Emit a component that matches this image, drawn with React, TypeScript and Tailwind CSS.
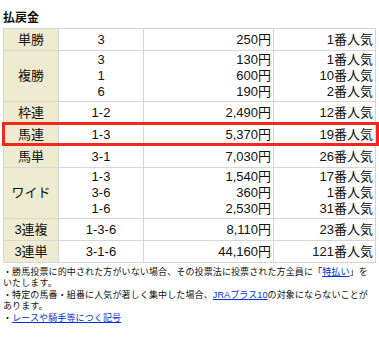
import React from 'react';

const font = { fontFamily: '"Liberation Sans", "Noto Sans CJK JP", sans-serif' };

type Row = { label: string; nums: string[]; pays: string[]; pops: string[] };

const rows: Row[] = [
  { label: '単勝', nums: ['3'], pays: ['250円'], pops: ['1番人気'] },
  { label: '複勝', nums: ['3', '1', '6'], pays: ['130円', '600円', '190円'], pops: ['1番人気', '10番人気', '2番人気'] },
  { label: '枠連', nums: ['1-2'], pays: ['2,490円'], pops: ['12番人気'] },
  { label: '馬連', nums: ['1-3'], pays: ['5,370円'], pops: ['19番人気'] },
  { label: '馬単', nums: ['3-1'], pays: ['7,030円'], pops: ['26番人気'] },
  { label: 'ワイド', nums: ['1-3', '3-6', '1-6'], pays: ['1,540円', '360円', '2,530円'], pops: ['17番人気', '1番人気', '31番人気'] },
  { label: '3連複', nums: ['1-3-6'], pays: ['8,110円'], pops: ['23番人気'] },
  { label: '3連単', nums: ['3-1-6'], pays: ['44,160円'], pops: ['121番人気'] },
];

const Lines = ({ items }: { items: string[] }) =>
  items.length === 1 ? (
    <div className="h-[21px] leading-[21px]">{items[0]}</div>
  ) : (
    <div className="h-[50px] pt-[1px]">
      {items.map((t, i) => (
        <div key={i} className="h-[16px] leading-[16px]">{t}</div>
      ))}
    </div>
  );

export default function App() {
  return (
    <div className="w-[379px] h-[340px] bg-white text-[#111] px-[3px] pt-[11px]" style={font}>
      <h3 className="text-[12px] font-bold leading-[14px] mb-[3px]">払戻金</h3>
      <div className="relative">
        <table className="w-[373px] border-collapse text-[13px]">
          <tbody>
            {rows.map((r) => (
              <tr key={r.label}>
                <th className="w-[55px] p-0 bg-[#eeebd1] border border-[#d6d6d6] font-normal text-center align-middle">
                  {r.label}
                </th>
                <td className="w-[85px] p-0 border border-[#d6d6d6] text-center">
                  <Lines items={r.nums} />
                </td>
                <td className="w-[130px] p-0 border border-[#d6d6d6] text-right pr-[2px]">
                  <Lines items={r.pays} />
                </td>
                <td className="p-0 border border-[#d6d6d6] text-right pr-[2px]">
                  <Lines items={r.pops} />
                </td>
              </tr>
            ))}
          </tbody>
        </table>
        <div className="absolute left-[-1px] top-[94px] w-[377px] h-[24px] border-[3px] border-[#f2281e] pointer-events-none" />
      </div>
      <div className="mt-[4px] text-[9px] tracking-[0.12px] leading-[11.4px] whitespace-nowrap">
        <p>
          ・勝馬投票に的中された方がいない場合、その投票法に投票された方全員に「
          <a href="#" className="text-[#0033dd] underline">特払い</a>
          」を
          <br />
          いたします。
        </p>
        <p>
          ・特定の馬番・組番に人気が著しく集中した場合、
          <a href="#" className="text-[#0033dd] underline">JRAプラス10</a>
          の対象にならないことが
          <br />
          あります。
        </p>
        <p>
          ・<a href="#" className="text-[#0033dd] underline">レースや騎手等につく記号</a>
        </p>
      </div>
    </div>
  );
}
